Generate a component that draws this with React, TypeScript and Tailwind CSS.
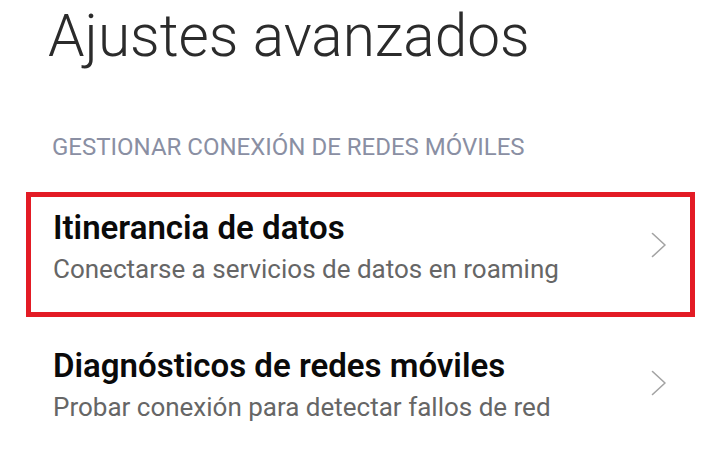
import React from 'react';

type Item = { title: string; subtitle: string; selected?: boolean };

const items: Item[] = [
    { title: 'Itinerancia de datos', subtitle: 'Conectarse a servicios de datos en roaming', selected: true },
    { title: 'Diagnósticos de redes móviles', subtitle: 'Probar conexión para detectar fallos de red' },
];

function Chevron() {
    return (
        <svg width="16" height="26" viewBox="0 0 16 26" fill="none" className="mb-[19px] shrink-0">
            <path d="M1.5 1.5 L14 13 L1.5 24.5" stroke="#a3a3a3" strokeWidth="1.6" strokeLinecap="round" strokeLinejoin="round" />
        </svg>
    );
}

function SettingRow({ item }: { item: Item }) {
    return (
        <div
            className={`flex items-center h-[125px] border-[5px] pl-[22px] pr-[23px] ${
                item.selected ? 'border-[#e31b25]' : 'border-transparent'
            }`}
        >
            <div className="flex-1 pt-[12px] self-start">
                <div className="text-[33px] leading-[38px] font-semibold text-[#0a0a0a]">{item.title}</div>
                <div className="mt-[6px] text-[26px] leading-[32px] text-[#666666]">{item.subtitle}</div>
            </div>
            <Chevron />
        </div>
    );
}

export default function App() {
    return (
        <div className="w-[720px] h-[453px] bg-white overflow-hidden font-['Roboto',sans-serif]">
            <h1 className="pl-[48px] pt-[7px] text-[58.5px] leading-[59px] font-light text-[#2b2b2b]">
                Ajustes avanzados
            </h1>
            <div className="mt-[69px] pl-[52px] text-[24px] leading-[24px] text-[#8a8fa3]">
                GESTIONAR CONEXIÓN DE REDES MÓVILES
            </div>
            <div className="mt-[33px] ml-[26px] w-[669px] flex flex-col gap-[13px]">
                {items.map((item) => (
                    <SettingRow key={item.title} item={item} />
                ))}
            </div>
        </div>
    );
}
